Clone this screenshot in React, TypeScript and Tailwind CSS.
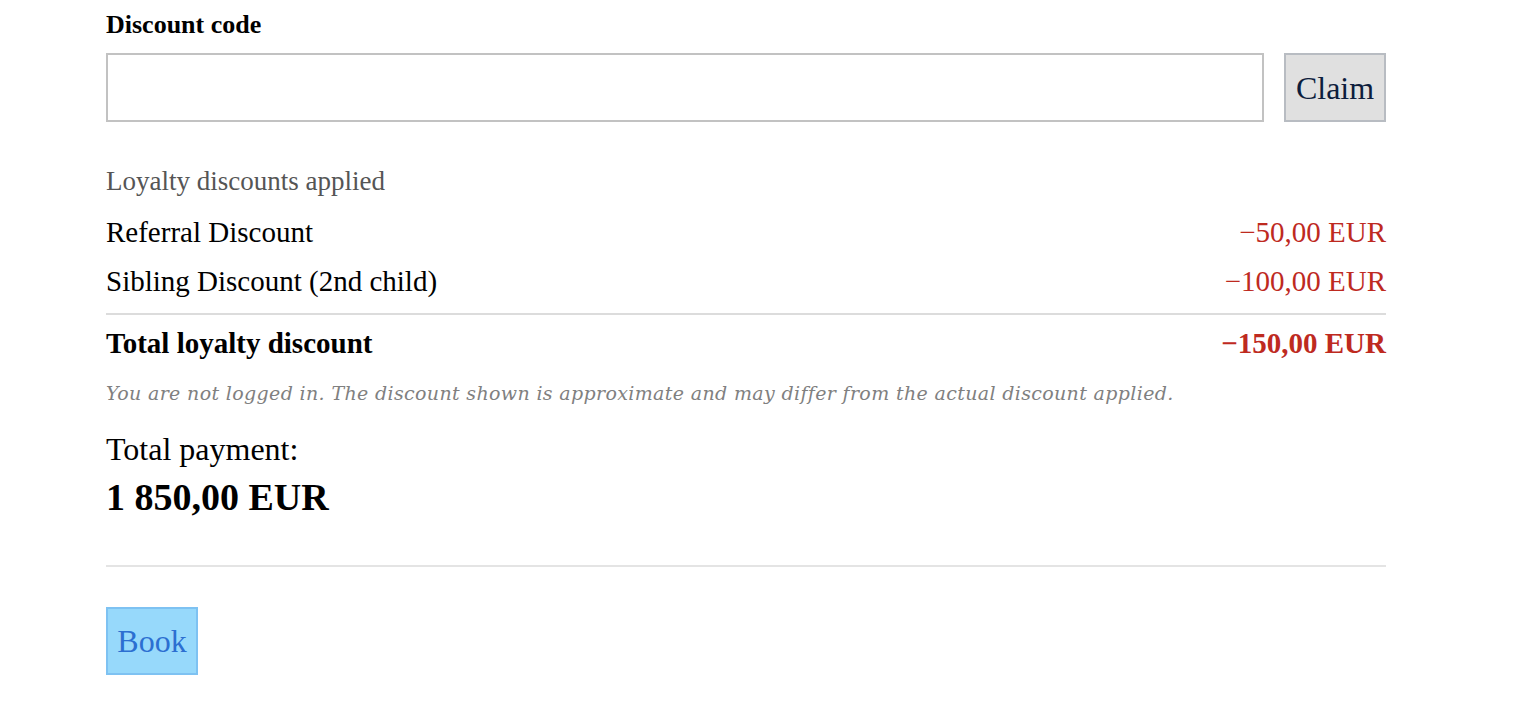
import React, { useState } from "react"

const lines = [
  { label: "Referral Discount", amount: "−50,00 EUR" },
  { label: "Sibling Discount (2nd child)", amount: "−100,00 EUR" },
]

export default function App() {
  const [code, setCode] = useState("")

  return (
    <div className="min-h-screen bg-white font-['Liberation_Serif',serif] text-black">
      <div className="ml-[106px] w-[1280px]">
        {/* discount code */}
        <label className="block pt-[9px] text-[26px] font-bold leading-[32px]">Discount code</label>
        <div className="mt-[12px] flex gap-[20px]">
          <input
            value={code}
            onChange={(e) => setCode(e.target.value)}
            className="h-[69px] flex-1 border-2 border-[#c2c2c2] bg-white px-3 text-[27px] outline-none"
          />
          <button className="h-[69px] w-[102px] border-2 border-[#b8bcc2] bg-[#e0e0e0] text-[32px] text-[#0d1d3d]">
            Claim
          </button>
        </div>

        {/* loyalty */}
        <div className="mt-[42px] text-[27px] leading-[34px] text-[#555555]">Loyalty discounts applied</div>
        <div className="mt-[17px] flex flex-col gap-[15px]">
          {lines.map((l) => (
            <div key={l.label} className="flex justify-between text-[29px] leading-[34px]">
              <span>{l.label}</span>
              <span className="text-[#be2a1f]">{l.amount}</span>
            </div>
          ))}
        </div>
        <div className="mt-[15px] border-t-2 border-[#dcdcdc]" />
        <div className="mt-[11px] flex justify-between text-[29px] font-bold leading-[34px]">
          <span>Total loyalty discount</span>
          <span className="text-[#be2a1f]">−150,00 EUR</span>
        </div>
        <p className="mt-[18px] font-['DejaVu_Serif',serif] text-[19px] italic leading-[30px] tracking-[0.35px] text-[#808080]">
          You are not logged in. The discount shown is approximate and may differ from the actual discount applied.
        </p>

        {/* total */}
        <div className="mt-[22px] text-[32px] leading-[38px]">Total payment:</div>
        <div className="mt-[7px] text-[38px] font-bold leading-[44px]">1 850,00 EUR</div>

        <div className="mt-[46px] border-t-2 border-[#e4e4e4]" />

        <button className="mt-[40px] h-[68px] w-[92px] border-2 border-[#7ec2f2] bg-[#97d9fb] text-[32px] text-[#2c6fd1]">
          Book
        </button>
      </div>
    </div>
  )
}
